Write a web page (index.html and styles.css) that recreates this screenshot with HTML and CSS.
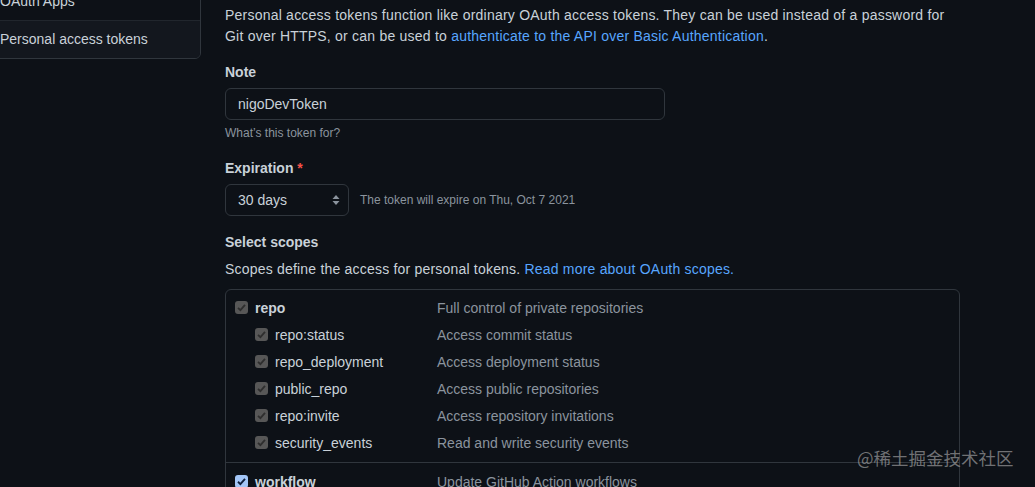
FILE: index.html
```html
<!DOCTYPE html>
<html lang="en">
<head>
<meta charset="utf-8">
<title>Personal access tokens</title>
<link rel="stylesheet" href="styles.css">
</head>
<body>
<div class="page">
  <aside class="sidebar">
    <nav class="menu">
      <a class="menu-item">OAuth Apps</a>
      <a class="menu-item active">Personal access tokens</a>
    </nav>
  </aside>
  <main class="content">
    <p class="intro">Personal access tokens function like ordinary OAuth access tokens. They can be used instead of a password for Git over HTTPS, or can be used to <a class="link">authenticate to the API over Basic Authentication</a>.</p>

    <div class="form-group">
      <div class="label">Note</div>
      <div class="input">nigoDevToken</div>
      <div class="note">What’s this token for?</div>
    </div>

    <div class="form-group">
      <div class="label">Expiration <span class="req">*</span></div>
      <div class="expire-row">
        <div class="select">
          <span>30 days</span>
          <svg class="arrows" width="8" height="12" viewBox="0 0 8 12"><path d="M4 1 L7.5 5 H0.5 Z" fill="#8b949e"/><path d="M4 11 L7.5 7 H0.5 Z" fill="#8b949e"/></svg>
        </div>
        <span class="hint">The token will expire on Thu, Oct 7 2021</span>
      </div>
    </div>

    <div class="form-group scopes-group">
      <div class="label">Select scopes</div>
      <p class="scopes-desc">Scopes define the access for personal tokens. <a class="link">Read more about OAuth scopes.</a></p>
      <div class="scopes">
        <div class="scope-group">
          <div class="scope-row top">
            <div class="scope-name"><span class="cb gray"><svg width="13" height="13" viewBox="0 0 13 13"><path d="M3 6.8 L5.4 9.1 L10 3.9" fill="none" stroke="#2e2e2e" stroke-width="1.8"/></svg></span><strong>repo</strong></div>
            <div class="scope-desc">Full control of private repositories</div>
          </div>
          <div class="scope-row nested">
            <div class="scope-name"><span class="cb gray"><svg width="13" height="13" viewBox="0 0 13 13"><path d="M3 6.8 L5.4 9.1 L10 3.9" fill="none" stroke="#2e2e2e" stroke-width="1.8"/></svg></span>repo:status</div>
            <div class="scope-desc">Access commit status</div>
          </div>
          <div class="scope-row nested">
            <div class="scope-name"><span class="cb gray"><svg width="13" height="13" viewBox="0 0 13 13"><path d="M3 6.8 L5.4 9.1 L10 3.9" fill="none" stroke="#2e2e2e" stroke-width="1.8"/></svg></span>repo_deployment</div>
            <div class="scope-desc">Access deployment status</div>
          </div>
          <div class="scope-row nested">
            <div class="scope-name"><span class="cb gray"><svg width="13" height="13" viewBox="0 0 13 13"><path d="M3 6.8 L5.4 9.1 L10 3.9" fill="none" stroke="#2e2e2e" stroke-width="1.8"/></svg></span>public_repo</div>
            <div class="scope-desc">Access public repositories</div>
          </div>
          <div class="scope-row nested">
            <div class="scope-name"><span class="cb gray"><svg width="13" height="13" viewBox="0 0 13 13"><path d="M3 6.8 L5.4 9.1 L10 3.9" fill="none" stroke="#2e2e2e" stroke-width="1.8"/></svg></span>repo:invite</div>
            <div class="scope-desc">Access repository invitations</div>
          </div>
          <div class="scope-row nested">
            <div class="scope-name"><span class="cb gray"><svg width="13" height="13" viewBox="0 0 13 13"><path d="M3 6.8 L5.4 9.1 L10 3.9" fill="none" stroke="#2e2e2e" stroke-width="1.8"/></svg></span>security_events</div>
            <div class="scope-desc">Read and write security events</div>
          </div>
        </div>
        <div class="scope-group">
          <div class="scope-row top">
            <div class="scope-name"><span class="cb blue"><svg width="13" height="13" viewBox="0 0 13 13"><path d="M3 6.8 L5.4 9.1 L10 3.9" fill="none" stroke="#0d1f3c" stroke-width="1.9"/></svg></span><strong>workflow</strong></div>
            <div class="scope-desc">Update GitHub Action workflows</div>
          </div>
        </div>
      </div>
    </div>
  </main>
</div>
<div class="watermark">@稀土掘金技术社区</div>
</body>
</html>
```

FILE: styles.css
```css
html, body {
  margin: 0;
  padding: 0;
  background: #0d1117;
  height: 100%;
  overflow: hidden;
}
body {
  font-family: "Liberation Sans", Arial, "Noto Sans CJK SC", sans-serif;
  font-size: 14px;
  line-height: 21px;
  color: #c9d1d9;
  position: relative;
}
.page {
  display: flex;
  gap: 24px;
  margin-left: -17px;
  align-items: flex-start;
}
.sidebar {
  width: 218px;
  flex: none;
  margin-top: -18px;
}
.menu {
  border: 1px solid #30363d;
  border-radius: 0 0 6px 6px;
  overflow: hidden;
}
.menu-item {
  display: block;
  padding: 8px 16px;
  color: #c9d1d9;
  border-bottom: 1px solid #21262d;
}
.menu-item:last-child {
  border-bottom: none;
}
.menu-item.active {
  background: #13171e;
}
.content {
  width: 735px;
  padding-top: 5px;
}
.intro {
  margin: 0;
  max-width: 722px;
  letter-spacing: 0.22px;
}
.link {
  color: #58a6ff;
  text-decoration: none;
}
.form-group {
  margin-top: 15px;
}
.form-group + .form-group {
  margin-top: 16px;
}
.label {
  font-weight: 700;
  margin-bottom: 5px;
}
.scopes-group .label {
  margin-bottom: 6px;
}
.req {
  color: #f85149;
}
.input {
  width: 440px;
  height: 32px;
  box-sizing: border-box;
  border: 1px solid #30363d;
  border-radius: 6px;
  padding: 0 12px;
  line-height: 30px;
  background: #0d1117;
}
.note {
  font-size: 12px;
  line-height: 18px;
  margin-top: 4px;
  color: #8b949e;
}
.expire-row {
  display: flex;
  align-items: center;
}
.select {
  width: 124px;
  height: 32px;
  box-sizing: border-box;
  border: 1px solid #30363d;
  border-radius: 6px;
  padding: 0 8px 0 12px;
  display: flex;
  align-items: center;
  justify-content: space-between;
}
.hint {
  font-size: 12px;
  color: #8b949e;
  margin-left: 11px;
}
.scopes-desc {
  margin: 0 0 9px;
  letter-spacing: 0.2px;
}
.scopes {
  border: 1px solid #30363d;
  border-radius: 6px;
}
.scope-group {
  padding: 8px 9px 8px;
}
.scope-group + .scope-group {
  border-top: 1px solid #30363d;
  padding-top: 9px;
}
.scope-row {
  display: flex;
}
.scope-row + .scope-row {
  margin-top: 6px;
}
.scope-name {
  width: 202px;
  box-sizing: border-box;
  display: flex;
  align-items: center;
  gap: 7px;
}
.scope-row.nested .scope-name {
  padding-left: 20px;
}
.scope-name strong {
  font-weight: 700;
}
.scope-desc {
  color: #8b949e;
}
.cb {
  width: 13px;
  height: 13px;
  border-radius: 3px;
  display: block;
  flex: none;
  margin-top: -3px;
}
.cb svg {
  display: block;
}
.cb.gray {
  background: #575757;
}
.cb.blue {
  background: #a3c6f7;
}
.watermark {
  position: absolute;
  left: 857px;
  top: 446px;
  font-family: "Noto Sans CJK SC", sans-serif;
  font-size: 17.5px;
  line-height: 24px;
  color: rgba(180, 180, 180, 0.6);
}
```
